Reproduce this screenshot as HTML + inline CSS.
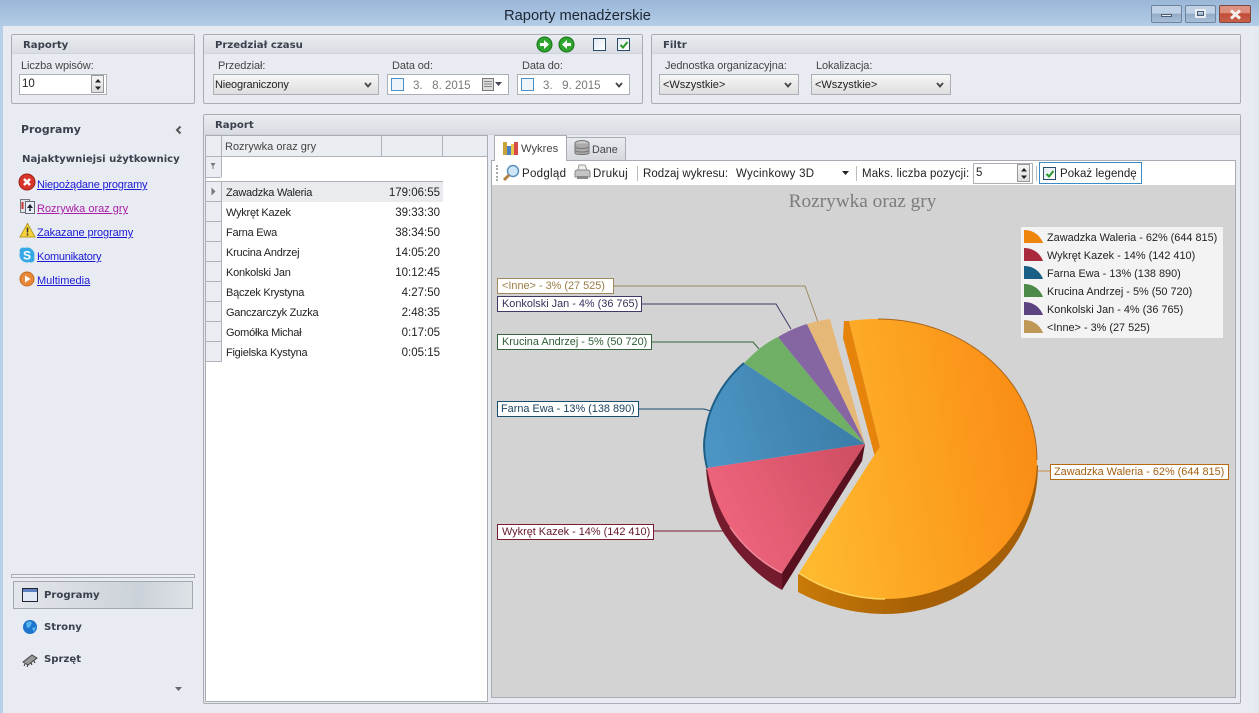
<!DOCTYPE html>
<html><head><meta charset="utf-8"><style>
html,body{margin:0;padding:0}
body{width:1259px;height:713px;overflow:hidden;position:relative;background:#e8ecf2;font-family:"Liberation Sans",sans-serif;font-size:11px;color:#222}
.a{position:absolute}
.t{position:absolute;white-space:nowrap;line-height:14px}
.b{font-family:"DejaVu Sans",sans-serif;font-weight:bold;font-size:10.15px;color:#3a414d}
.l{color:#444;font-size:11px;letter-spacing:-.1px}
.n{font-size:11px;letter-spacing:-.25px}
.r{font-size:11.5px}
.tb{font-size:11.5px;color:#222;letter-spacing:.05px}
.panel{position:absolute;border:1px solid #a9adb3;border-radius:2px;box-sizing:border-box;background:#e8ecf2}
.ph{position:absolute;left:0;right:0;top:0;height:18px;background:linear-gradient(#e9ecf0,#d9dde3);border-bottom:1px solid #d0d4da}
.sel{position:absolute;box-sizing:border-box;height:21px;border:1px solid #acb0b5;background:linear-gradient(#f6f6f6,#dedede);line-height:21px;padding-left:2px;font-size:11px;color:#222}
.date{background:#fff;color:#777;font-size:11.5px;line-height:20px}
.chev{position:absolute;right:6px;top:7px;width:8px;height:6px}
.lnk{position:absolute;left:37px;white-space:nowrap;color:#1a1ad6;text-decoration:underline;font-size:11px;letter-spacing:-.1px;line-height:14px}
.cb{position:absolute;box-sizing:border-box;width:13px;height:13px;border:1px solid #2b4c66;background:linear-gradient(135deg,#e4ebf2,#fff)}
.spin{position:absolute;width:13px;box-sizing:border-box;border:1px solid #999;background:linear-gradient(#f5f5f5,#ddd)}
.lab{position:absolute;box-sizing:border-box;height:16px;background:#fff;border:1px solid;line-height:15px;padding-left:4px;font-size:10.9px;white-space:nowrap}
.ln{position:absolute;left:206px;width:15px;height:1px;background:#b0b4ba}
</style></head><body>
<!-- title bar -->
<div class="a" style="left:0;top:0;width:1259px;height:26px;background:linear-gradient(#9ab7d8,#b3cce6)"></div>
<div class="a" style="left:0;top:26px;width:3px;height:687px;background:#b7d0ea"></div>
<div class="a" style="left:1255px;top:26px;width:4px;height:687px;background:#e4e9ef"></div>
<div class="t" style="left:504px;top:7px;font-size:14.7px;line-height:18px;color:#1c2633">Raporty menadżerskie</div>
<div class="a" style="left:1151px;top:5px;width:31px;height:18px;box-sizing:border-box;border:1px solid #70849b;border-radius:2px;background:linear-gradient(#bed1e6 45%,#94abc6 50%,#a9bfd8)"><div class="a" style="left:9px;top:8px;width:11px;height:3px;background:#e8edf2;border:1px solid #4d5d70;box-sizing:border-box"></div></div>
<div class="a" style="left:1185px;top:5px;width:31px;height:18px;box-sizing:border-box;border:1px solid #70849b;border-radius:2px;background:linear-gradient(#bed1e6 45%,#94abc6 50%,#a9bfd8)"><div class="a" style="left:9px;top:3px;width:11px;height:9px;border:2px solid #e8edf2;outline:1px solid #4d5d70;outline-offset:-3px;box-sizing:border-box"></div></div>
<div class="a" style="left:1219px;top:5px;width:32px;height:18px;box-sizing:border-box;border:1px solid #7d4a42;border-radius:2px;background:linear-gradient(#dd9080 40%,#c14d38 50%,#c7614c)"><svg class="a" style="left:9px;top:3px" width="13" height="11"><path d="M2 1.500L11 9.500M11 1.500L2 9.500" stroke="#f4f1ef" stroke-width="3"/></svg></div>

<!-- Raporty -->
<div class="panel" style="left:11px;top:34px;width:184px;height:70px"><div class="ph"></div></div>
<div class="t b" style="left:23px;top:39px">Raporty</div>
<div class="t l" style="left:21px;top:59px">Liczba wpisów:</div>
<div class="a" style="left:19px;top:74px;width:88px;height:21px;box-sizing:border-box;border:1px solid #acb0b5;background:#fff;line-height:19px;padding-left:2px;font-size:11.5px">10</div>
<div class="spin" style="left:91px;top:75px;height:18px"><svg class="a" style="left:2px;top:1px" width="8" height="15"><path d="M4 2L7 5.500H1ZM1 9.500H7L4 13Z" fill="#222"/></svg></div>

<!-- Przedzial -->
<div class="panel" style="left:203px;top:34px;width:440px;height:70px"><div class="ph"></div></div>
<div class="t b" style="left:215px;top:39px">Przedział czasu</div>
<div class="t l" style="left:218px;top:59px">Przedział:</div>
<div class="sel" style="left:213px;top:74px;width:166px;letter-spacing:-.15px;padding-left:1px">Nieograniczony<svg class="chev" viewBox="0 0 8 6"><path d="M1 1L4 4.500L7 1" fill="none" stroke="#444" stroke-width="1.800"/></svg></div>
<div class="t l" style="left:392px;top:59px">Data od:</div>
<div class="sel date" style="left:387px;top:74px;width:122px"><span class="a" style="left:3px;top:3px;width:13px;height:13px;box-sizing:border-box;border:1px solid #4a90c8;background:#edf4fa"></span><span class="a" style="left:25px;top:1px;white-space:pre">3.   8. 2015</span><svg class="a" style="left:94px;top:3px" width="24" height="14"><rect x="0.500" y="0.500" width="11" height="12" fill="#ddd" stroke="#777"/><path d="M2 3.500h8M2 6h8M2 8.500h8" stroke="#888"/><path d="M13 4h7l-3.500 4z" fill="#445"/></svg></div>
<div class="t l" style="left:522px;top:59px">Data do:</div>
<div class="sel date" style="left:517px;top:74px;width:113px"><span class="a" style="left:3px;top:3px;width:13px;height:13px;box-sizing:border-box;border:1px solid #4a90c8;background:#edf4fa"></span><span class="a" style="left:25px;top:1px;white-space:pre">3.   9. 2015</span><svg class="chev" viewBox="0 0 8 6"><path d="M1 1L4 4.500L7 1" fill="none" stroke="#444" stroke-width="1.800"/></svg></div>
<svg class="a" style="left:536px;top:36px" width="40" height="17"><circle cx="8.500" cy="8.500" r="7.500" fill="#2fa52f" stroke="#167016"/><path d="M4 7h4V4l5 4.500L8 13v-3H4z" fill="#fff"/><circle cx="30.500" cy="8.500" r="7.500" fill="#2fa52f" stroke="#167016"/><path d="M35 7h-4V4l-5 4.500L31 13v-3h4z" fill="#fff"/></svg>
<div class="cb" style="left:593px;top:38px"></div>
<div class="cb" style="left:617px;top:38px"><svg class="a" style="left:1px;top:1px" width="10" height="10"><path d="M1.500 5L4 7.500L8.500 2" fill="none" stroke="#2a9a2a" stroke-width="2"/></svg></div>

<!-- Filtr -->
<div class="panel" style="left:651px;top:34px;width:590px;height:70px"><div class="ph"></div></div>
<div class="t b" style="left:663px;top:39px">Filtr</div>
<div class="t l" style="left:665px;top:59px">Jednostka organizacyjna:</div>
<div class="sel" style="left:659px;top:74px;width:140px;padding-left:3px">&lt;Wszystkie&gt;<svg class="chev" viewBox="0 0 8 6"><path d="M1 1L4 4.500L7 1" fill="none" stroke="#444" stroke-width="1.800"/></svg></div>
<div class="t l" style="left:816px;top:59px">Lokalizacja:</div>
<div class="sel" style="left:811px;top:74px;width:140px;padding-left:3px">&lt;Wszystkie&gt;<svg class="chev" viewBox="0 0 8 6"><path d="M1 1L4 4.500L7 1" fill="none" stroke="#444" stroke-width="1.800"/></svg></div>

<!-- Left nav -->
<div class="t b" style="left:21px;top:123px;font-size:10.9px">Programy</div>
<svg class="a" style="left:175px;top:125px" width="8" height="10"><path d="M5.500 1.500L2 5L5.500 8.500" fill="none" stroke="#555" stroke-width="2"/></svg>
<div class="t b" style="left:22px;top:153px">Najaktywniejsi użytkownicy</div>
<svg class="a" style="left:18px;top:173px" width="18" height="18"><circle cx="9" cy="9" r="8" fill="#d8352a" stroke="#a32018"/><path d="M6 6L12 12M12 6L6 12" stroke="#fff" stroke-width="2.500"/></svg>
<div class="lnk" style="top:178px;letter-spacing:-.2px">Niepożądane programy</div>
<svg class="a" style="left:19px;top:198px" width="17" height="17"><rect x="1.500" y="1.500" width="9" height="13" fill="#dfe3e8" stroke="#777"/><rect x="6.500" y="3.500" width="9" height="12" fill="#e6eef6" stroke="#667"/><path d="M11 6l3 4h-6zM10.500 10h1l.5 3h-2z" fill="#223"/><path d="M3.500 4v7" stroke="#c33" stroke-width="2"/></svg>
<div class="lnk" style="top:202px;color:#a81ea8;letter-spacing:0">Rozrywka oraz gry</div>
<svg class="a" style="left:19px;top:222px" width="17" height="17"><path d="M8.500 1.500L16 15H1Z" fill="#f7d33c" stroke="#b79a20"/><path d="M8.500 5.500v5M8.500 11.500v2" stroke="#333" stroke-width="1.500"/></svg>
<div class="lnk" style="top:226px">Zakazane programy</div>
<svg class="a" style="left:18px;top:246px" width="18" height="18"><circle cx="9" cy="9" r="7.500" fill="#35a8e6"/><circle cx="5" cy="5" r="3.500" fill="#35a8e6"/><circle cx="13" cy="13" r="3.500" fill="#35a8e6"/><text x="5" y="13.500" font-family="Liberation Sans" font-weight="bold" font-size="12" fill="#fff">S</text></svg>
<div class="lnk" style="top:250px;letter-spacing:-.25px">Komunikatory</div>
<svg class="a" style="left:19px;top:271px" width="16" height="16"><circle cx="8" cy="8" r="7" fill="#e8883a" stroke="#c46a20"/><path d="M6 4.500L11.500 8L6 11.500Z" fill="#fff"/></svg>
<div class="lnk" style="top:274px;letter-spacing:0">Multimedia</div>

<div class="a" style="left:11px;top:574px;width:184px;height:4px;box-sizing:border-box;border:1px solid #a9adb3;background:#eef0f4"></div>
<div class="a" style="left:13px;top:581px;width:180px;height:28px;box-sizing:border-box;border:1px solid #a3a8ae;background:linear-gradient(100deg,#e3e6eb,#ccd2d9 70%,#dfe3e8)"></div>
<svg class="a" style="left:22px;top:588px" width="16" height="15"><rect x="0.500" y="0.500" width="15" height="13" fill="#dfe8f5" stroke="#223"/><rect x="1" y="1" width="14" height="3" fill="#5c82c4"/></svg>
<div class="t b" style="left:44px;top:589px">Programy</div>
<svg class="a" style="left:22px;top:619px" width="16" height="16"><circle cx="8" cy="8" r="7" fill="#1e76cc"/><path d="M4 4q4-3 6 0l-2 4-3 1zM10 9l4-1-2 5z" fill="#58b4ee"/></svg>
<div class="t b" style="left:44px;top:621px">Strony</div>
<svg class="a" style="left:22px;top:653px" width="16" height="14"><path d="M1 9L10 2L15 5L6 12Z" fill="#999" stroke="#444"/><path d="M3 11l-1 2M6 12l-1 2M9 10l1 2M12 8l1 2" stroke="#333"/></svg>
<div class="t b" style="left:44px;top:653px">Sprzęt</div>
<svg class="a" style="left:174px;top:687px" width="9" height="5"><path d="M1 0H8L4.500 4Z" fill="#666"/></svg>

<!-- Raport panel -->
<div class="panel" style="left:203px;top:114px;width:1038px;height:590px"><div class="ph" style="height:19px"></div></div>
<div class="t b" style="left:215px;top:119px">Raport</div>

<!-- grid -->
<div class="a" style="left:205px;top:135px;width:283px;height:567px;box-sizing:border-box;border:1px solid #a9adb3;background:#fff"></div>
<div class="a" style="left:206px;top:136px;width:281px;height:20px;background:#eaedf1;border-bottom:1px solid #b0b4ba"></div>
<div class="a" style="left:221px;top:136px;width:1px;height:41px;background:#b0b4ba"></div>
<div class="a" style="left:381px;top:136px;width:1px;height:20px;background:#b0b4ba"></div>
<div class="a" style="left:442px;top:136px;width:1px;height:20px;background:#b0b4ba"></div>
<div class="a" style="left:206px;top:157px;width:15px;height:20px;background:#eaedf1"></div>
<div class="a" style="left:206px;top:177px;width:15px;height:1px;background:#b0b4ba"></div>
<svg class="a" style="left:210px;top:162px" width="6" height="8"><path d="M0.500 1h5L3.500 4v3h-1V4z" fill="#777"/></svg>
<div class="a" style="left:206px;top:181px;width:237px;height:1px;background:#b0b4ba"></div>
<div class="a" style="left:206px;top:182px;width:15px;height:180px;background:#eaedf1"></div>
<div class="a" style="left:221px;top:182px;width:1px;height:180px;background:#b0b4ba"></div>
<div class="a" style="left:222px;top:182px;width:221px;height:20px;background:#e9ebee"></div>
<div class="ln" style="top:201px"></div><div class="ln" style="top:221px"></div><div class="ln" style="top:241px"></div><div class="ln" style="top:261px"></div><div class="ln" style="top:281px"></div><div class="ln" style="top:301px"></div><div class="ln" style="top:321px"></div><div class="ln" style="top:341px"></div><div class="ln" style="top:361px"></div>
<svg class="a" style="left:211px;top:187px" width="5" height="9"><path d="M0.500 0.500L4.500 4.500L0.500 8.500Z" fill="#777"/></svg>
<div class="t" style="left:225px;top:140px;color:#444;font-size:11px">Rozrywka oraz gry</div>
<div class="t n" style="left:226px;top:186px">Zawadzka Waleria</div><div class="t r" style="right:819px;top:186px">179:06:55</div>
<div class="t n" style="left:226px;top:206px">Wykręt Kazek</div><div class="t r" style="right:819px;top:206px">39:33:30</div>
<div class="t n" style="left:226px;top:226px">Farna Ewa</div><div class="t r" style="right:819px;top:226px">38:34:50</div>
<div class="t n" style="left:226px;top:246px">Krucina Andrzej</div><div class="t r" style="right:819px;top:246px">14:05:20</div>
<div class="t n" style="left:226px;top:266px">Konkolski Jan</div><div class="t r" style="right:819px;top:266px">10:12:45</div>
<div class="t n" style="left:226px;top:286px">Bączek Krystyna</div><div class="t r" style="right:819px;top:286px">4:27:50</div>
<div class="t n" style="left:226px;top:306px">Ganczarczyk Zuzka</div><div class="t r" style="right:819px;top:306px">2:48:35</div>
<div class="t n" style="left:226px;top:326px">Gomółka Michał</div><div class="t r" style="right:819px;top:326px">0:17:05</div>
<div class="t n" style="left:226px;top:346px">Figielska Kystyna</div><div class="t r" style="right:819px;top:346px">0:05:15</div>

<!-- tabs -->
<div class="a" style="left:491px;top:160px;width:745px;height:538px;box-sizing:border-box;border:1px solid #a9adb3;background:#d3d3d3"></div>
<div class="a" style="left:566px;top:137px;width:60px;height:24px;box-sizing:border-box;border:1px solid #a9adb3;background:linear-gradient(#e8ebef,#d5d9de)"></div>
<div class="a" style="left:494px;top:135px;width:73px;height:26px;box-sizing:border-box;border:1px solid #a9adb3;border-bottom:none;background:#fff"></div>
<svg class="a" style="left:503px;top:141px" width="15" height="14"><rect x="0" y="1" width="4" height="13" fill="#c9a23c"/><rect x="4" y="5" width="4" height="9" fill="#4a7fc4"/><rect x="8" y="3" width="3" height="11" fill="#e8c94c"/><rect x="11" y="1" width="4" height="13" fill="#d84a4a"/></svg>
<div class="t" style="left:521px;top:142px;color:#444;font-size:11.2px">Wykres</div>
<svg class="a" style="left:574px;top:140px" width="16" height="17"><ellipse cx="8" cy="3.500" rx="7" ry="3" fill="#c9c9c9" stroke="#777"/><path d="M1 3.500V13c0 2 14 2 14 0V3.500" fill="#aaa" stroke="#777"/><path d="M1 7c2 2 12 2 14 0M1 10.500c2 2 12 2 14 0" fill="none" stroke="#777"/></svg>
<div class="t" style="left:592px;top:143px;color:#444;font-size:10.8px">Dane</div>

<!-- toolbar -->
<div class="a" style="left:492px;top:161px;width:743px;height:24px;background:#fff"></div>
<div class="a" style="left:496px;top:165px;width:2px;height:16px;border-left:2px dotted #aaa;box-sizing:border-box"></div>
<svg class="a" style="left:502px;top:164px" width="18" height="18"><circle cx="11" cy="7" r="5.500" fill="#cfe6f7" stroke="#5a8fbc" stroke-width="1.500"/><path d="M7 11L2 16" stroke="#b5803f" stroke-width="3"/></svg>
<div class="t tb" style="left:522px;top:167px;letter-spacing:.3px">Podgląd</div>
<svg class="a" style="left:574px;top:164px" width="17" height="17"><path d="M5 1h6l2 5H4z" fill="#eee" stroke="#999"/><path d="M1 8q0-2 3-2h9q3 0 3 2v5H1z" fill="#c4c4c4" stroke="#888"/><rect x="3" y="12" width="11" height="3" fill="#888"/></svg>
<div class="t tb" style="left:593px;top:167px;letter-spacing:.3px">Drukuj</div>
<div class="a" style="left:637px;top:166px;width:1px;height:15px;background:#bbb"></div>
<div class="t tb" style="left:643px;top:167px">Rodzaj wykresu:</div>
<div class="t tb" style="left:736px;top:167px;letter-spacing:.25px">Wycinkowy 3D</div>
<svg class="a" style="left:842px;top:171px" width="7" height="5"><path d="M0 0H7L3.500 4Z" fill="#222"/></svg>
<div class="a" style="left:856px;top:166px;width:1px;height:15px;background:#bbb"></div>
<div class="t tb" style="left:862px;top:167px;letter-spacing:.12px">Maks. liczba pozycji:</div>
<div class="a" style="left:973px;top:163px;width:60px;height:21px;box-sizing:border-box;border:1px solid #acb0b5;background:#fff;line-height:19px;padding-left:2px;font-size:11.5px">5</div>
<div class="spin" style="left:1017px;top:164px;height:18px"><svg class="a" style="left:2px;top:1px" width="8" height="15"><path d="M4 2L7 5.500H1ZM1 9.500H7L4 13Z" fill="#222"/></svg></div>
<div class="a" style="left:1036px;top:166px;width:1px;height:15px;background:#bbb"></div>
<div class="a" style="left:1039px;top:162px;width:103px;height:22px;box-sizing:border-box;border:1px solid #3d8bc4;background:#fff"></div>
<div class="cb" style="left:1043px;top:167px"><svg class="a" style="left:1px;top:1px" width="10" height="10"><path d="M1.500 5L4 7.500L8.500 2" fill="none" stroke="#2a9a2a" stroke-width="2"/></svg></div>
<div class="t tb" style="left:1060px;top:167px">Pokaż legendę</div>

<!-- chart -->
<div class="t" style="left:491px;top:191px;width:743px;text-align:center;font-family:'Liberation Serif',serif;font-size:19.3px;line-height:22px;color:#7c7c7c">Rozrywka oraz gry</div>

<svg class="a" style="left:0;top:0" width="1259" height="713">
<defs>
<linearGradient id="or" x1="0" x2="1" y1="0.600" y2="0.400"><stop offset="0" stop-color="#ffb92f"/><stop offset="1" stop-color="#fa8c14"/></linearGradient>
<linearGradient id="ors" x1="0" x2="1"><stop offset="0" stop-color="#c97a08"/><stop offset="0.500" stop-color="#a65f05"/><stop offset="1" stop-color="#a35f08"/></linearGradient>
<linearGradient id="rd" x1="0" x2="1" y1="0.700" y2="0.300"><stop offset="0" stop-color="#f1677f"/><stop offset="1" stop-color="#d14f63"/></linearGradient>
<linearGradient id="bl" x1="0" x2="1" y1="0.600" y2="0.400"><stop offset="0" stop-color="#4b95c4"/><stop offset="1" stop-color="#3a7aa6"/></linearGradient>
</defs>
<g fill="none" stroke-width="1">
<path d="M613 286H805L818 322" stroke="#9f8a5e"/>
<path d="M641 304H776L791 329" stroke="#44376a"/>
<path d="M651 342H753L759 349" stroke="#33663c"/>
<path d="M638 409H704L714 412" stroke="#1a4e70"/>
<path d="M653 531H722L731 527" stroke="#7a1c30"/>
<path d="M1037 471H1050" stroke="#c98a45"/>
</g>
<!-- red side -->
<path d="M706 468C708 498 715 520 725 535C740 558 760 578 782 590L782 570Z" fill="#751b2e"/>
<path d="M865 444L782 573L782 590L862 461Z" fill="#580f1e"/>
<!-- slices -->
<path d="M865 444L707 468C704 455 703 445 705 435C708 408 722 382 744 363Z" fill="url(#bl)"/>
<path d="M707 468C704 455 703 445 705 435C708 408 722 382 744 363" fill="none" stroke="#1f5f86" stroke-width="2"/>
<path d="M865 444L744 363C755 352 765 343 778 337Z" fill="#70b066"/>
<path d="M865 444L778 337C788 331 797 327 807 324Z" fill="#8565a2"/>
<path d="M865 444L807 324C814 322 822 320 830 319Z" fill="#e6b878"/>
<path d="M865 444L707 468C711 490 720 512 730 527C742 545 760 562 782 573Z" fill="url(#rd)"/>
<path d="M730 527C742 545 760 562 782 573" fill="none" stroke="#ee8a9c" stroke-width="1.500"/>
<!-- orange -->
<path d="M798 575L798 592C824 606 855 614 885 614C969 614 1038 550 1038 465L800 573Z" fill="url(#ors)"/>
<path d="M844 321L843 338L875 457L880 447L849 321Z" fill="#e5830a"/>
<path d="M849 321L880 447L873 457L799 573C824 590 855 599 885 599C969 599 1037 536 1037 460C1037 382 966 319 878 319C866 319 855 320 849 321Z" fill="url(#or)"/>
<path d="M799 573C824 590 855 599 885 599" fill="none" stroke="#ffd35c" stroke-width="1.500"/>
<path d="M1037 460C1037 382 966 319 878 319" fill="none" stroke="#a8651c" stroke-width="1"/>
</svg>

<div class="lab" style="left:497px;top:278px;width:117px;border-color:#9f8a5e;color:#9a7d45">&lt;Inne&gt; - 3% (27 525)</div>
<div class="lab" style="left:497px;top:296px;width:145px;border-color:#44376a;color:#3a2f5c">Konkolski Jan - 4% (36 765)</div>
<div class="lab" style="left:497px;top:334px;width:155px;border-color:#33663c;color:#2f5c38">Krucina Andrzej - 5% (50 720)</div>
<div class="lab" style="left:497px;top:401px;width:142px;border-color:#1a4e70;color:#173f5a;padding-left:3px">Farna Ewa - 13% (138 890)</div>
<div class="lab" style="left:497px;top:524px;width:157px;border-color:#7a1c30;color:#64182a">Wykręt Kazek - 14% (142 410)</div>
<div class="lab" style="left:1050px;top:464px;width:179px;border-color:#b56a12;color:#a65f10;padding-left:3px">Zawadzka Waleria - 62% (644 815)</div>

<!-- legend -->
<div class="a" style="left:1021px;top:227px;width:202px;height:111px;background:#f3f3f3"></div>
<svg class="a" style="left:1021px;top:227px" width="30" height="111">
<path d="M3 3C12 3 19 8 22 16H3Z" fill="#f0850e"/>
<path d="M3 21C12 21 19 26 22 34H3Z" fill="#a82a3c"/>
<path d="M3 39C12 39 19 44 22 52H3Z" fill="#1c5f86"/>
<path d="M3 57C12 57 19 62 22 70H3Z" fill="#4c8a4a"/>
<path d="M3 75C12 75 19 80 22 88H3Z" fill="#5c4480"/>
<path d="M3 93C12 93 19 98 22 106H3Z" fill="#bf9858"/>
</svg>
<div class="t" style="left:1047px;top:231px;font-size:10.9px">Zawadzka Waleria - 62% (644 815)</div>
<div class="t" style="left:1047px;top:249px;font-size:10.9px">Wykręt Kazek - 14% (142 410)</div>
<div class="t" style="left:1047px;top:267px;font-size:10.9px">Farna Ewa - 13% (138 890)</div>
<div class="t" style="left:1047px;top:285px;font-size:10.9px">Krucina Andrzej - 5% (50 720)</div>
<div class="t" style="left:1047px;top:303px;font-size:10.9px">Konkolski Jan - 4% (36 765)</div>
<div class="t" style="left:1047px;top:321px;font-size:10.9px">&lt;Inne&gt; - 3% (27 525)</div>
</body></html>
